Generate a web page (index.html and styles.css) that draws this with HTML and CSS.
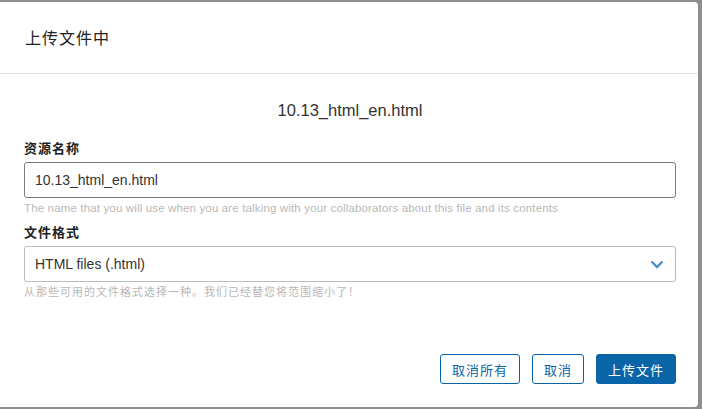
FILE: index.html
```html
<!DOCTYPE html>
<html lang="zh-CN">
<head>
<meta charset="utf-8">
<title>上传文件中</title>
<link rel="stylesheet" href="styles.css">
</head>
<body>
<div class="dialog">
  <div class="dialog-header">
    <h1 class="dialog-title">上传文件中</h1>
  </div>
  <div class="dialog-body">
    <div class="file-name">10.13_html_en.html</div>
    <div class="field">
      <label class="field-label">资源名称</label>
      <div class="input">10.13_html_en.html</div>
      <div class="help help-en">The name that you will use when you are talking with your collaborators about this file and its contents</div>
    </div>
    <div class="field">
      <label class="field-label">文件格式</label>
      <div class="input select">
        <span>HTML files (.html)</span>
        <svg class="chevron" width="14" height="9" viewBox="0 0 14 9"><path d="M1.5 1.5 L7 7 L12.5 1.5" fill="none" stroke="#4a8fc9" stroke-width="2.4"/></svg>
      </div>
      <div class="help help-cn">从那些可用的文件格式选择一种。我们已经替您将范围缩小了！</div>
    </div>
  </div>
  <div class="dialog-footer">
    <button class="btn btn-outline btn-wide">取消所有</button>
    <button class="btn btn-outline btn-narrow">取消</button>
    <button class="btn btn-primary btn-wide">上传文件</button>
  </div>
</div>
</body>
</html>
```
FILE: styles.css
```css
html, body {
  margin: 0;
  padding: 0;
  background: #8e8e90;
  width: 702px;
  height: 409px;
  overflow: hidden;
}
body {
  font-family: "Liberation Sans", "Noto Sans CJK SC", sans-serif;
  color: #333;
}
.dialog {
  margin-top: 2px;
  width: 698px;
  height: 405px;
  background: #fff;
  border-radius: 0 4px 4px 0;
  display: flex;
  flex-direction: column;
}
.dialog-header {
  height: 72px;
  border-bottom: 1px solid #e5e5e5;
  display: flex;
  align-items: center;
  padding-left: 25px;
  box-sizing: border-box;
}
.dialog-title {
  margin: 0 0 2px 0;
  font-family: "Noto Sans CJK SC", sans-serif;
  font-weight: 400;
  font-size: 16px;
  letter-spacing: 1px;
  color: #222;
  line-height: 20px;
}
.dialog-body {
  padding: 26px 22px 0 24px;
}
.file-name {
  text-align: center;
  font-size: 16.5px;
  line-height: 20px;
  color: #333;
  margin-bottom: 19px;
}
.field-label {
  display: block;
  font-family: "Noto Sans CJK SC", sans-serif;
  font-weight: 700;
  font-size: 13px;
  letter-spacing: 1px;
  line-height: 18px;
  color: #222;
  margin-bottom: 5px;
}
.input {
  height: 36px;
  box-sizing: border-box;
  border: 1px solid #7a7a7a;
  border-radius: 3px;
  padding: 0 10px;
  display: flex;
  align-items: center;
  font-size: 14px;
  color: #333;
}
.select {
  border-color: #bdbdbd;
  justify-content: space-between;
  padding-right: 11px;
}
.chevron {
  display: block;
}
.help {
  color: #b8b8b8;
  font-size: 11px;
  line-height: 14px;
  margin-top: 3px;
}
.help-en {
  font-size: 11.5px;
  letter-spacing: 0.15px;
  margin-bottom: 8px;
}
.help-cn {
  font-family: "Noto Sans CJK SC", sans-serif;
  letter-spacing: 1px;
  margin-top: 2px;
}
.dialog-footer {
  margin-top: auto;
  display: flex;
  justify-content: flex-end;
  gap: 12px;
  padding: 0 22px 23px 0;
}
.btn {
  height: 30px;
  box-sizing: border-box;
  border: 1px solid #0a64a8;
  border-radius: 3px;
  background: #fff;
  color: #0a64a8;
  font-family: "Noto Sans CJK SC", sans-serif;
  font-size: 13px;
  letter-spacing: 1px;
  padding: 0;
  cursor: pointer;
}
.btn-wide { width: 80px; }
.btn-narrow { width: 52px; }
.btn-primary {
  background: #0a64a8;
  color: #fff;
}
```
